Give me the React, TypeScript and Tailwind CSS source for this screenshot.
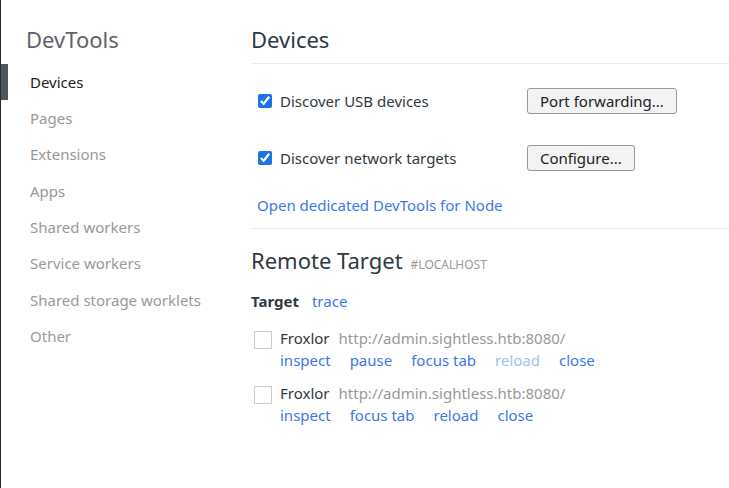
const NAV = [
  "Devices",
  "Pages",
  "Extensions",
  "Apps",
  "Shared workers",
  "Service workers",
  "Shared storage worklets",
  "Other",
];

const TARGETS = [
  {
    name: "Froxlor",
    url: "http://admin.sightless.htb:8080/",
    actions: [
      { label: "inspect" },
      { label: "pause" },
      { label: "focus tab" },
      { label: "reload", disabled: true },
      { label: "close" },
    ],
  },
  {
    name: "Froxlor",
    url: "http://admin.sightless.htb:8080/",
    actions: [
      { label: "inspect" },
      { label: "focus tab" },
      { label: "reload" },
      { label: "close" },
    ],
  },
];

export default function App() {
  return (
    <div
      className="flex h-[488px] w-full bg-white border-l border-[#2b2b2b] text-[15px] text-[#303942]"
      style={{ fontFamily: '"Noto Sans", "Open Sans", sans-serif' }}
    >
      <aside className="w-[250px] shrink-0">
        <h1 className="pl-[25px] pt-[24px] h-[64px] text-[22px] leading-[30px] text-[#5f6368]">
          DevTools
        </h1>
        <nav className="flex flex-col">
          {NAV.map((item, i) => (
            <div
              key={item}
              className={
                "h-[36.3px] flex items-center pl-[22px] border-l-[7px] " +
                (i === 0 ? "border-[#4e5661] text-[#202124]" : "border-transparent text-[#999999]")
              }
            >
              {item}
            </div>
          ))}
        </nav>
      </aside>

      <main className="flex-1">
        <h2 className="pt-[24px] h-[64px] text-[22px] leading-[30px] text-[#303942] border-b border-[#ebebeb]">
          Devices
        </h2>

        <div className="pl-[6px]">
          <Row label="Discover USB devices" button="Port forwarding..." className="mt-[24px]" />
          <Row label="Discover network targets" button="Configure..." className="mt-[31px]" />
          <a className="block mt-[19px] h-[30px] leading-[30px] text-[#3b78e7]">
            Open dedicated DevTools for Node
          </a>
        </div>

        <div className="mt-[8px] border-t border-[#ebebeb]" />

        <div className="pt-[16px] flex items-baseline gap-[8px]">
          <span className="text-[22px] leading-[30px] text-[#303942]">Remote Target</span>
          <span className="text-[12px] text-[#999999] uppercase">#localhost</span>
        </div>

        <div className="mt-[16px] flex items-center gap-[13px] h-[20px]">
          <span className="font-bold text-[#303942]">Target</span>
          <span className="text-[#3b78e7]">trace</span>
        </div>

        <div className="pl-[3px] mt-[16px] flex flex-col gap-[11px]">
          {TARGETS.map((t, i) => (
            <div key={i} className="flex gap-[8px]">
              <div className="mt-[4px] w-[18px] h-[18px] border border-[#cccccc] shrink-0" />
              <div className="flex flex-col leading-[22px]">
                <div className="flex gap-[9px]">
                  <span className="text-[#303942]">{t.name}</span>
                  <span className="text-[#999999]">{t.url}</span>
                </div>
                <div className="flex gap-[19px]">
                  {t.actions.map((a) => (
                    <span
                      key={a.label}
                      className={a.disabled ? "text-[#a4c0ee]" : "text-[#3b78e7]"}
                    >
                      {a.label}
                    </span>
                  ))}
                </div>
              </div>
            </div>
          ))}
        </div>
      </main>
    </div>
  );
}

function Row({
  label,
  button,
  className,
}: {
  label: string;
  button: string;
  className?: string;
}) {
  return (
    <div className={"flex items-center h-[26px] " + (className ?? "")}>
      <label className="flex items-center w-[270px]">
        <input
          type="checkbox"
          defaultChecked
          className="w-[14px] h-[14px] m-0 ml-[1px] accent-[#1a73e8]"
        />
        <span className="ml-[8px] text-[#303942]">{label}</span>
      </label>
      <button className="h-[26px] px-[12px] text-[15px] text-[#222] bg-[#f3f3f3] border border-[#999] rounded-[3px]">
        {button}
      </button>
    </div>
  );
}
